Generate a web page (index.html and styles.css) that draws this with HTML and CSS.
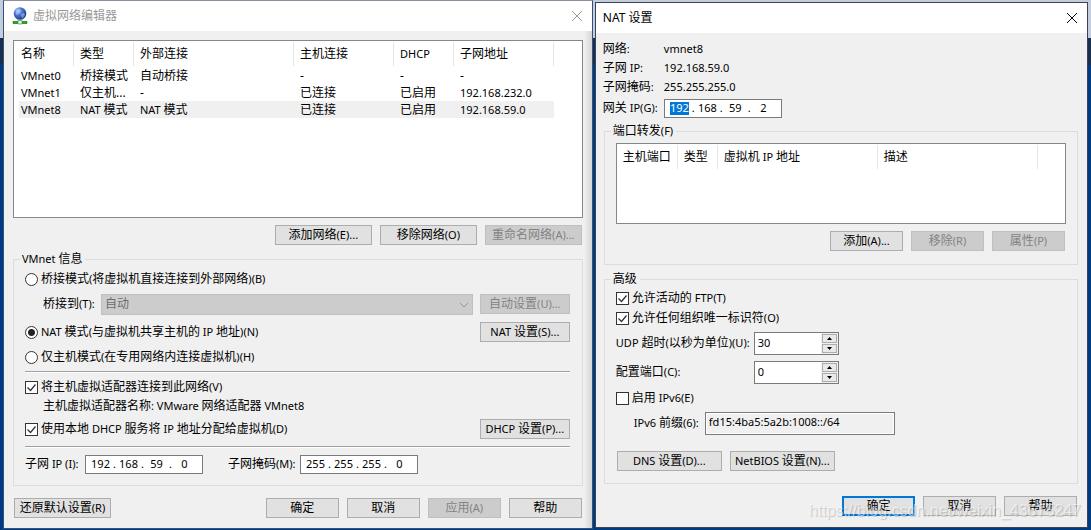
FILE: index.html
```html
<!DOCTYPE html>
<html lang="zh-CN">
<head>
<meta charset="utf-8">
<title>虚拟网络编辑器</title>
<link rel="stylesheet" href="styles.css">
</head>
<body>
<main class="desktop">
  <section class="window editor">
    <header class="titlebar inactive">
      <svg class="app-icon" width="16" height="18" viewBox="0 0 16 18" aria-hidden="true">
        <defs><radialGradient id="globe" cx="35%" cy="30%" r="75%"><stop offset="0" stop-color="#d5e6ff"/><stop offset=".35" stop-color="#5a83dc"/><stop offset="1" stop-color="#12307c"/></radialGradient></defs>
        <circle cx="8" cy="6.500" r="6.300" fill="url(#globe)"/>
        <path d="M4 4l3-2 2 2-2 3-3 1zM9 7l3-1 1 2-3 4z" fill="#9ec0f5" opacity=".6"/>
        <path d="M1 14.500h14v2H1z" fill="#12b012" stroke="#0a6b0a" stroke-width=".6"/>
        <path d="M6 13.500h4v3.500H6z" fill="#e8f5e8" stroke="#338033" stroke-width=".6"/>
      </svg>
      <h1 class="title">虚拟网络编辑器</h1>
      <button class="close" type="button" aria-label="关闭"><svg width="12" height="12" viewBox="0 0 12 12"><path d="M1 1l10 10M11 1L1 11" fill="none" stroke="currentColor"/></svg></button>
    </header>
    <div class="content">
      <div class="list list-networks">
        <table class="networks">
          <colgroup><col class="w55"><col class="w60"><col class="w160"><col class="w100"><col class="w60"><col class="w100"></colgroup>
          <thead><tr><th>名称</th><th>类型</th><th>外部连接</th><th>主机连接</th><th><span class="en">DHCP</span></th><th>子网地址</th></tr></thead>
          <tbody>
            <tr><td><span class="en">VMnet0</span></td><td>桥接模式</td><td>自动桥接</td><td>-</td><td>-</td><td>-</td></tr>
            <tr><td><span class="en">VMnet1</span></td><td>仅主机...</td><td>-</td><td>已连接</td><td>已启用</td><td><span class="en">192.168.232.0</span></td></tr>
            <tr class="selected"><td><span class="en">VMnet8</span></td><td><span class="en">NAT </span>模式</td><td><span class="en">NAT </span>模式</td><td>已连接</td><td>已启用</td><td><span class="en">192.168.59.0</span></td></tr>
          </tbody>
        </table>
      </div>
      <div class="actions">
        <button class="btn w97" type="button">添加网络<span class="en">(E)...</span></button>
        <button class="btn w97" type="button">移除网络<span class="en">(O)</span></button>
        <button class="btn w97" type="button" disabled>重命名网络<span class="en">(A)...</span></button>
      </div>
      <fieldset class="group">
        <legend><span class="en">VMnet </span>信息</legend>
        <div class="row h24"><label class="option"><input type="radio" name="mode"><span>桥接模式<span class="en">(</span>将虚拟机直接连接到外部网络<span class="en">)(B)</span></span></label></div>
        <div class="row h26 indent">
          <label class="bridge-label" for="bridge">桥接到<span class="en">(T):</span></label>
          <div class="select-wrap"><select id="bridge" disabled><option>自动</option></select><svg class="chevron" width="10" height="6" viewBox="0 0 10 6"><path d="M1 1l4 4 4-4" fill="none" stroke="#999"/></svg></div>
          <button class="btn w90" type="button" disabled>自动设置<span class="en">(U)...</span></button>
        </div>
        <div class="row h30"><label class="option"><input type="radio" name="mode" checked><span><span class="en">NAT </span>模式<span class="en">(</span>与虚拟机共享主机的<span class="en"> IP </span>地址<span class="en">)(N)</span></span></label><button class="btn w90 end" type="button"><span class="en">NAT </span>设置<span class="en">(S)...</span></button></div>
        <div class="row h20"><label class="option"><input type="radio" name="mode"><span>仅主机模式<span class="en">(</span>在专用网络内连接虚拟机<span class="en">)(H)</span></span></label></div>
        <hr class="rule">
        <div class="row h24"><label class="option"><input type="checkbox" checked><span>将主机虚拟适配器连接到此网络<span class="en">(V)</span></span></label></div>
        <div class="row h14 indent"><span>主机虚拟适配器名称<span class="en">: VMware </span>网络适配器<span class="en"> VMnet8</span></span></div>
        <div class="row h32"><label class="option"><input type="checkbox" checked><span>使用本地<span class="en"> DHCP </span>服务将<span class="en"> IP </span>地址分配给虚拟机<span class="en">(D)</span></span></label><button class="btn w90 end" type="button"><span class="en">DHCP </span>设置<span class="en">(P)...</span></button></div>
        <hr class="rule tight">
        <div class="row h32">
          <label class="subnet-label" for="ip1">子网<span class="en"> IP (I):</span></label>
          <div class="ip"><input id="ip1" value="192"><i>.</i><input aria-label="IP 2" value="168"><i>.</i><input aria-label="IP 3" value="59"><i>.</i><input aria-label="IP 4" value="0"></div>
          <label class="mask-label" for="mask1">子网掩码<span class="en">(M):</span></label>
          <div class="ip"><input id="mask1" value="255"><i>.</i><input aria-label="掩码 2" value="255"><i>.</i><input aria-label="掩码 3" value="255"><i>.</i><input aria-label="掩码 4" value="0"></div>
        </div>
      </fieldset>
      <footer class="footer">
        <button class="btn w97 start" type="button">还原默认设置<span class="en">(R)</span></button>
        <button class="btn w73" type="button">确定</button>
        <button class="btn w73" type="button">取消</button>
        <button class="btn w73" type="button" disabled>应用<span class="en">(A)</span></button>
        <button class="btn w73" type="button">帮助</button>
      </footer>
    </div>
  </section>

  <section class="window nat">
    <header class="titlebar">
      <h2 class="title">NAT 设置</h2>
      <button class="close" type="button" aria-label="关闭"><svg width="12" height="12" viewBox="0 0 12 12"><path d="M1 1l10 10M11 1L1 11" fill="none" stroke="currentColor"/></svg></button>
    </header>
    <div class="content">
      <div class="info">
        <span>网络<span class="en">:</span></span><span class="en">vmnet8</span>
        <span>子网<span class="en"> IP:</span></span><span class="en">192.168.59.0</span>
        <span>子网掩码<span class="en">:</span></span><span class="en">255.255.255.0</span>
        <label for="gw">网关<span class="en"> IP(G):</span></label>
        <div class="ip"><input id="gw" class="picked" value="192"><i>.</i><input aria-label="网关 2" value="168"><i>.</i><input aria-label="网关 3" value="59"><i>.</i><input aria-label="网关 4" value="2"></div>
      </div>
      <fieldset class="group ports-group">
        <legend>端口转发<span class="en">(F)</span></legend>
        <div class="list list-ports">
          <table class="ports">
            <colgroup><col class="w61"><col class="w40"><col class="w160"><col class="w160"></colgroup>
            <thead><tr><th>主机端口</th><th>类型</th><th>虚拟机<span class="en"> IP </span>地址</th><th>描述</th></tr></thead>
          </table>
        </div>
        <div class="actions">
          <button class="btn w73" type="button">添加<span class="en">(A)...</span></button>
          <button class="btn w73" type="button" disabled>移除<span class="en">(R)</span></button>
          <button class="btn w73" type="button" disabled>属性<span class="en">(P)</span></button>
        </div>
      </fieldset>
      <fieldset class="group advanced">
        <legend>高级</legend>
        <div class="row h20"><label class="option"><input type="checkbox" checked><span>允许活动的<span class="en"> FTP(T)</span></span></label></div>
        <div class="row h20"><label class="option"><input type="checkbox" checked><span>允许任何组织唯一标识符<span class="en">(O)</span></span></label></div>
        <div class="row h30"><label class="spin-label" for="udp"><span class="en">UDP </span>超时<span class="en">(</span>以秒为单位<span class="en">)(U):</span></label>
          <div class="spin"><input id="udp" value="30"><div class="arrows"><button type="button" aria-label="增加"><svg width="5" height="3" viewBox="0 0 5 3"><path d="M0 3h5L2.500 0z"/></svg></button><button type="button" aria-label="减少"><svg width="5" height="3" viewBox="0 0 5 3"><path d="M0 0h5L2.500 3z"/></svg></button></div></div></div>
        <div class="row h28"><label class="spin-label" for="port">配置端口<span class="en">(C):</span></label>
          <div class="spin"><input id="port" value="0"><div class="arrows"><button type="button" aria-label="增加"><svg width="5" height="3" viewBox="0 0 5 3"><path d="M0 3h5L2.500 0z"/></svg></button><button type="button" aria-label="减少"><svg width="5" height="3" viewBox="0 0 5 3"><path d="M0 0h5L2.500 3z"/></svg></button></div></div></div>
        <div class="row h24"><label class="option"><input type="checkbox"><span>启用<span class="en"> IPv6(E)</span></span></label></div>
        <div class="row h26 indent"><label class="prefix-label" for="prefix"><span class="en">IPv6 </span>前缀<span class="en">(6):</span></label><input id="prefix" class="prefix" value="fd15:4ba5:5a2b:1008::/64" readonly></div>
        <div class="extra">
          <button class="btn w105" type="button"><span class="en">DNS </span>设置<span class="en">(D)...</span></button>
          <button class="btn w105" type="button"><span class="en">NetBIOS </span>设置<span class="en">(N)...</span></button>
        </div>
      </fieldset>
      <footer class="footer">
        <button class="btn w73 default" type="button">确定</button>
        <button class="btn w73" type="button">取消</button>
        <button class="btn w73" type="button">帮助</button>
      </footer>
    </div>
    <div class="watermark">https://blog.csdn.net/weixin_43675247</div>
  </section>
</main>
</body>
</html>
```
FILE: styles.css
```css
* { box-sizing: border-box; }

body {
  margin: 0;
  font: 12px/16px "Noto Sans", "Noto Sans CJK SC", sans-serif;
  color: #000;
}

button, input, select { font: inherit; color: inherit; margin: 0; }

.en { font-size: 11px; line-height: 0; white-space: pre-wrap; }

.desktop {
  display: flex;
  gap: 2px;
  min-height: 100vh;
  padding: 0 3px;
  background: linear-gradient(#c4cddd 38px, #18304d 38px, #18304d 65px, #003a80 65px);
}

.window { background: #f0f0f0; border: 1px solid #33527c; min-width: 0; }
.editor {
  flex: 590 1 0;
  margin-bottom: 1px;
  border-top-color: #8b8f9d;
  background: linear-gradient(to left, #d6d6d6, #f0f0f0 8px);
}
.nat {
  position: relative;
  flex: 493 1 0;
  margin: 2px 0;
  border-color: #3b4252;
}

.titlebar {
  display: flex;
  align-items: center;
  height: 30px;
  padding-left: 8px;
  background: #fff;
}
.nat .titlebar { padding-left: 7px; }
.titlebar.inactive { color: #999; }
.title { margin: 0; font-size: 12px; font-weight: 400; }
.app-icon { margin-right: 5px; }
.close {
  display: flex;
  margin-left: auto;
  padding: 9px;
  border: 0;
  background: none;
}

.content { padding: 9px 9px 10px; }

.list { background: #fff; border: 1px solid #828790; overflow: hidden; }
.list-networks { height: 178px; }
.list-ports { height: 81px; }

table { border-collapse: separate; border-spacing: 0; table-layout: fixed; }
.networks { width: 535px; margin-left: 5px; }
.ports { width: 421px; }
th, td { padding: 0 0 0 6px; font-weight: 400; text-align: left; white-space: nowrap; }
.networks th:first-child, .networks td:first-child { padding-left: 2px; }
th { height: 26px; background: linear-gradient(#e5e5e5, #e5e5e5) right 1px / 1px 24px no-repeat; }
td { height: 17px; line-height: 17px; }
.selected td { background: #f0f0f0; }

.w40 { width: 40px; }
.w55 { width: 55px; }
.w60 { width: 60px; }
.w61 { width: 61px; }
.w73 { width: 73px; }
.w90 { width: 90px; }
.w97 { width: 97px; }
.w100 { width: 100px; }
.w105 { width: 105px; }
.w160 { width: 160px; }

.actions, .footer { display: flex; justify-content: flex-end; gap: 8px; }
.actions { padding: 7px 1px 6px 0; }
.footer { padding: 12px 1px 0; }
.start { margin-right: auto; }
.end { margin-left: auto; }

.btn {
  flex: none;
  height: 20px;
  padding: 0;
  border: 1px solid #adadad;
  border-radius: 0;
  background: #e1e1e1;
  line-height: 16px;
  white-space: nowrap;
}
.btn:disabled { color: #838383; background: #ccc; border-color: #bfbfbf; }
.btn.default { border: 2px solid #0078d7; line-height: 14px; }

.group {
  min-width: 0;
  margin: 0;
  padding: 0 12px 5px 11px;
  border: 1px solid #dcdcdc;
}
legend { height: 16px; margin-left: -5px; padding: 0 3px 0 2px; }

.row { display: flex; align-items: center; white-space: nowrap; }
.h14 { height: 14px; }
.h20 { height: 20px; }
.h24 { height: 24px; }
.h26 { height: 26px; }
.h28 { height: 28px; }
.h30 { height: 30px; }
.h32 { height: 32px; }
.indent { padding-left: 18px; }

.option { display: flex; align-items: center; gap: 3px; }
.option input {
  appearance: none;
  width: 13px;
  height: 13px;
  border: 1px solid #333;
  background: #fff;
}
.option input[type="radio"] { border-radius: 50%; }
.option input[type="radio"]:checked { background: radial-gradient(circle, #222 3px, #fff 4px); }
.option input[type="checkbox"]:checked {
  background: #fff url("data:image/svg+xml,%3Csvg xmlns='http://www.w3.org/2000/svg' viewBox='0 0 11 11'%3E%3Cpath d='M1.500 5.500l3 3 5-6' fill='none' stroke='%23333' stroke-width='1.300'/%3E%3C/svg%3E");
}

.bridge-label { width: 58px; }
.select-wrap { position: relative; flex: 1; margin-right: 7px; }
.select-wrap select {
  display: block;
  appearance: none;
  width: 100%;
  height: 21px;
  padding: 0 3px;
  border: 1px solid #bfbfbf;
  border-radius: 0;
  background: #ccc;
  color: #6d6d6d;
  opacity: 1;
}
.chevron { position: absolute; top: 8px; right: 4px; }

.rule {
  height: 2px;
  margin: 4px 0 2px;
  border: 0;
  border-top: 1px solid #a0a0a0;
  border-bottom: 1px solid #fff;
}
.rule.tight { margin: 1px 0 0; }

.subnet-label { width: 60px; }
.mask-label { width: 72px; margin-left: 25px; }

.ip {
  display: flex;
  align-items: center;
  width: 118px;
  height: 19px;
  padding-left: 2px;
  border: 1px solid #7a7a7a;
  background: #fff;
  font-size: 11px;
}
.ip input {
  width: 25px;
  height: 15px;
  padding: 0;
  border: 0;
  background: none;
  text-align: center;
}
.ip i { width: 3px; font-style: normal; }
.ip .picked { width: 19px; height: 13px; margin: 0 3px; background: #0078d7; color: #fff; }

.nat .content { padding: 6px 9px 10px 7px; }
.info {
  display: grid;
  grid-template-columns: 61px 1fr;
  grid-template-rows: 19px 19px 19px 24px;
  align-items: center;
}
.info > .en { line-height: 16px; }
.nat .group { margin: 3px 0 0 1px; padding: 0 11px; }
.ports-group .list { margin-top: 4px; }
.ports-group .actions { padding-bottom: 13px; }
.nat .advanced { margin-top: 6px; padding-bottom: 12px; }
.advanced legend { margin-bottom: 1px; }

.spin-label { width: 138px; }
.spin {
  display: flex;
  width: 85px;
  height: 23px;
  border: 1px solid #7a7a7a;
  background: #fff;
}
.spin input {
  flex: 1;
  min-width: 0;
  height: 19px;
  padding: 0 3px;
  border: 0;
  background: none;
  font-size: 11px;
}
.arrows { display: grid; gap: 1px; width: 17px; padding: 1px; background: #f0f0f0; }
.arrows button {
  display: flex;
  align-items: center;
  justify-content: center;
  padding: 0;
  border: 1px solid #adadad;
  background: #e9e9e9;
}

.prefix-label { width: 71px; }
.prefix {
  width: 190px;
  height: 23px;
  padding: 0 3px 3px;
  border: 1px solid #7a7a7a;
  background: #f0f0f0;
  box-shadow: inset 0 0 0 1px #fff;
  font-size: 11px;
}
.extra { display: flex; gap: 8px; padding: 15px 0 0 1px; }

.watermark {
  position: absolute;
  right: 6px;
  bottom: 7px;
  font: 16px/18px "Liberation Sans", sans-serif;
  color: rgba(255, 255, 255, .55);
  text-shadow: 1px 1px 1px rgba(0, 0, 0, .18);
  pointer-events: none;
}
```
